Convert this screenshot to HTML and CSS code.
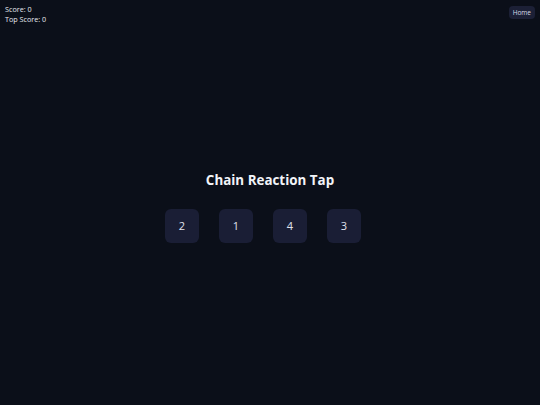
FILE: index.html
```html
<!DOCTYPE html>
<html>
  <head>
    <title>Chain Reaction Tap</title>
    <link rel="stylesheet" href="styles.css">
  </head>
  <body>
  <div class="scoreboard">
    <div>Score: <span id="score">0</span></div>
    <div>Top Score: <span id="top-score">0</span></div>
  </div>
  <button class="home-button">Home</button>
  <div class="game">
    <h1>Chain Reaction Tap</h1>
    <div class="tiles">
      <button class="tile">2</button>
      <button class="tile">1</button>
      <button class="tile">4</button>
      <button class="tile">3</button>
    </div>
  </div>
</body>
</html>
```

FILE: styles.css
```css
html, body {
  margin: 0;
  height: 100%;
}

body {
  background-color: #0b0f19;
  color: #e6e8f0;
  font-family: "Open Sans", "Noto Sans", sans-serif;
}

.scoreboard {
  position: absolute;
  top: 4px;
  left: 5px;
  font-size: 7.2px;
  line-height: 10px;
}

.home-button {
  position: absolute;
  top: 6px;
  right: 5px;
  padding: 2px 4px;
  font-family: inherit;
  font-size: 6.5px;
  color: #d8dbe6;
  background-color: #1c2036;
  border: none;
  border-radius: 4px;
}

.game {
  height: 100%;
  display: flex;
  flex-direction: column;
  align-items: center;
  justify-content: center;
  padding-top: 8px;
  box-sizing: border-box;
}

.game h1 {
  margin: 0;
  font-size: 13.4px;
  font-weight: 700;
  color: #f2f4f8;
}

.tiles {
  display: flex;
  gap: 20px;
  margin-top: 20px;
  padding-right: 14px;
}

.tile {
  width: 34px;
  height: 34px;
  border: none;
  border-radius: 6px;
  background-color: #1a1e35;
  color: #e0e3ee;
  font-family: inherit;
  font-size: 11px;
}
```
